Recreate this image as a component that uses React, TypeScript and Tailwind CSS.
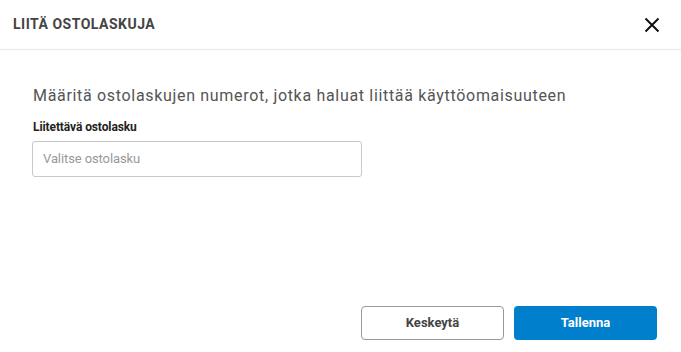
const App = () => {
   return (
      <div
         className="w-[681px] h-[352px] bg-white flex flex-col"
         style={{ fontFamily: "Roboto, 'Liberation Sans', sans-serif" }}
      >
         {/* header */}
         <div className="h-[50px] flex items-center justify-between pl-[13px] pr-[20px] border-b border-[#e8e8e8]">
            <h2 className="text-[14px] font-bold text-[#444] tracking-[0.5px]">
               LIITÄ OSTOLASKUJA
            </h2>
            <button className="w-[18px] h-[18px] flex items-center justify-center text-[#111]">
               <svg width="16" height="16" viewBox="0 0 16 16" fill="none">
                  <path d="M1.5 1.5L14.5 14.5M14.5 1.5L1.5 14.5" stroke="currentColor" strokeWidth="2" />
               </svg>
            </button>
         </div>

         {/* body */}
         <div className="flex-1 flex flex-col px-[32px] pt-[34px]">
            <p className="text-[16px] text-[#555] tracking-[0.68px] leading-[24px] ml-[1px]">
               Määritä ostolaskujen numerot, jotka haluat liittää käyttöomaisuuteen
            </p>
            <label className="mt-[10px] text-[12px] font-bold text-[#222] tracking-[-0.1px] leading-[18px] ml-[1px]">
               Liitettävä ostolasku
            </label>
            <div className="mt-[5px] w-[330px] h-[36px] border border-[#c8c8c8] rounded-[3px] flex items-center px-[10px]">
               <span className="text-[13px] text-[#999] tracking-[-0.1px]">Valitse ostolasku</span>
            </div>
         </div>

         {/* footer */}
         <div className="flex justify-end gap-[10px] pr-[24px] pb-[12px]">
            <button className="w-[143px] h-[34px] border border-[#999] rounded-[4px] bg-white text-[13px] font-bold text-[#444]">
               Keskeytä
            </button>
            <button className="w-[143px] h-[34px] rounded-[4px] bg-[#0080cc] text-[13px] font-bold text-white">
               Tallenna
            </button>
         </div>
      </div>
   );
};

export default App;
